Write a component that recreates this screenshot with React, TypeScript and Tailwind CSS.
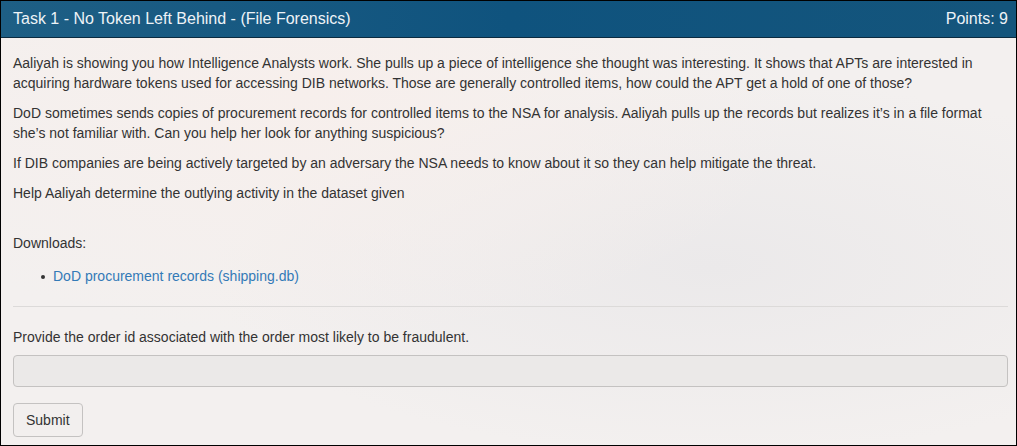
export default function App() {
  return (
    <div className="w-[1017px] h-[446px] border border-black bg-[#f3f0ef] text-[#333] text-[14px] leading-[20px]" style={{ fontFamily: '"Liberation Sans", Arial, sans-serif', backgroundImage: 'radial-gradient(ellipse at 30% 20%, #f7efec 0%, transparent 50%), radial-gradient(ellipse at 70% 60%, #ebe9ea 0%, transparent 50%)' }}>
      <div className="h-[37px] flex items-center justify-between pl-[12px] pr-[8px] text-[16px] text-[#eef3f7] bg-gradient-to-r from-[#1e5f85] via-[#0f537e] to-[#14557c] border-b border-[#0b2b40]">
        <span>Task 1 - No Token Left Behind - (File Forensics)</span>
        <span>Points: 9</span>
      </div>
      <div className="pl-[12px] pr-[8px] pt-[15px]">
        <p className="mb-[10px]">Aaliyah is showing you how Intelligence Analysts work. She pulls up a piece of intelligence she thought was interesting. It shows that APTs are interested in acquiring hardware tokens used for accessing DIB networks. Those are generally controlled items, how could the APT get a hold of one of those?</p>
        <p className="mb-[10px]">DoD sometimes sends copies of procurement records for controlled items to the NSA for analysis. Aaliyah pulls up the records but realizes it’s in a file format she’s not familiar with. Can you help her look for anything suspicious?</p>
        <p className="mb-[10px]">If DIB companies are being actively targeted by an adversary the NSA needs to know about it so they can help mitigate the threat.</p>
        <p className="mb-[10px]">Help Aaliyah determine the outlying activity in the dataset given</p>
        <p className="mt-[30px] mb-[13px]">Downloads:</p>
        <ul className="pl-[28px] mb-[20px]">
          <li className="flex items-center">
            <span className="w-[4px] h-[4px] rounded-full bg-[#333] mr-[8px] mt-[1px]"></span>
            <a className="text-[#337ab7]">DoD procurement records (shipping.db)</a>
          </li>
        </ul>
        <hr className="border-t border-[#dcdad9] mt-[0px] mb-[20px]" />
        <p className="mb-[8px]">Provide the order id associated with the order most likely to be fraudulent.</p>
        <div className="h-[32px] w-full border border-[#c4c2c1] rounded-[4px] bg-[#ebe9e8]"></div>
        <button className="mt-[16px] h-[34px] px-[12px] border border-[#c4c2c1] rounded-[4px] bg-[#f2efee] text-[#333]">Submit</button>
      </div>
    </div>
  );
}
